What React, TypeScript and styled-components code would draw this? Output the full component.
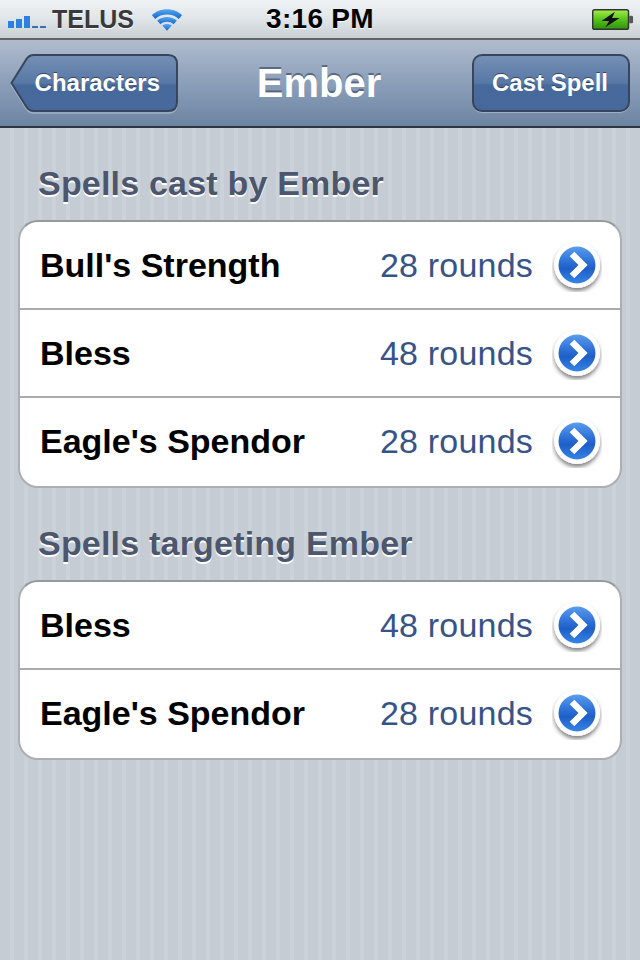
import React from 'react';
import styled, {createGlobalStyle} from 'styled-components';

const GlobalStyle = createGlobalStyle`
	html, body {
		margin: 0;
		padding: 0;
		background: #c5ccd4;
	}
	* {
		box-sizing: border-box;
	}
`;

const FONT = `"Liberation Sans", Arial, sans-serif`;

const sections = [
	{
		title: 'Spells cast by Ember',
		spells: [
			{name: "Bull's Strength", time: '28 rounds'},
			{name: 'Bless', time: '48 rounds'},
			{name: "Eagle's Spendor", time: '28 rounds'},
		],
	},
	{
		title: 'Spells targeting Ember',
		spells: [
			{name: 'Bless', time: '48 rounds'},
			{name: "Eagle's Spendor", time: '28 rounds'},
		],
	},
];

function SignalBars() {
	return (
		<SignalSvg width='40' height='12' viewBox='0 0 40 12'>
			<rect x='0' y='5' width='6' height='7' fill='#2f7fe0' />
			<rect x='8' y='3' width='6' height='9' fill='#2f7fe0' />
			<rect x='16' y='0' width='6' height='12' fill='#2f7fe0' />
			<rect x='24' y='10' width='6' height='2' fill='#3f6fb0' />
			<rect x='32' y='10' width='6' height='2' fill='#3f6fb0' />
		</SignalSvg>
	);
}

function WifiIcon() {
	return (
		<svg width='32' height='26' viewBox='0 0 34 26'>
			<defs>
				<linearGradient id='wifi' x1='0' y1='0' x2='0' y2='1'>
					<stop offset='0' stopColor='#5aa8f0' />
					<stop offset='1' stopColor='#0f66d0' />
				</linearGradient>
			</defs>
			<path d='M1 9 C9 0.5 25 0.5 33 9 L29.5 13 C23 6.8 11 6.8 4.5 13 Z' fill='url(#wifi)' />
			<path d='M6.5 14.5 C12 9.5 22 9.5 27.5 14.5 L24 18.5 C20 15.2 14 15.2 10 18.5 Z' fill='url(#wifi)' />
			<path d='M12 20 C14.5 17.8 19.5 17.8 22 20 L17 25.5 Z' fill='url(#wifi)' />
		</svg>
	);
}

function BatteryIcon() {
	return (
		<svg width='42' height='23' viewBox='0 0 44 24'>
			<defs>
				<linearGradient id='batt' x1='0' y1='0' x2='0' y2='1'>
					<stop offset='0' stopColor='#a6ee4a' />
					<stop offset='0.5' stopColor='#56c41a' />
					<stop offset='1' stopColor='#2f8f0c' />
				</linearGradient>
			</defs>
			<rect x='0.75' y='1.75' width='37.5' height='20.5' rx='2' fill='url(#batt)' stroke='#333' strokeWidth='1.5' />
			<path d='M39 8 H41.5 Q43 8 43 9.5 V14.5 Q43 16 41.5 16 H39 Z' fill='#555' />
			<path d='M24 4 L10 13.5 H18 L14 20 L29 10.5 H21 Z' fill='#111' />
		</svg>
	);
}

function BackShape() {
	return (
		<BackSvg width='168' height='60' viewBox='0 0 168 60'>
			<defs>
				<linearGradient id='back' x1='0' y1='0' x2='0' y2='1'>
					<stop offset='0' stopColor='#7490b5' />
					<stop offset='0.5' stopColor='#5877a4' />
					<stop offset='0.54' stopColor='#47699b' />
					<stop offset='1' stopColor='#46689a' />
				</linearGradient>
			</defs>
			<path
				d='M1.5 30 L16.5 6 Q19 2 24 2 H158 Q167 2 167 11 V49 Q167 58 158 58 H24 Q19 58 16.5 54 Z'
				fill='none'
				stroke='rgba(255,255,255,0.3)'
				strokeWidth='1.5'
				transform='translate(0 1)'
			/>
			<path
				d='M1.5 29 L16.5 5 Q19 1 24 1 H158 Q167 1 167 10 V48 Q167 57 158 57 H24 Q19 57 16.5 53 Z'
				fill='url(#back)'
				stroke='#37465c'
				strokeWidth='2'
			/>
		</BackSvg>
	);
}

function Disclosure() {
	return (
		<svg width='50' height='54' viewBox='0 0 50 54'>
			<defs>
				<linearGradient id='disc' x1='0' y1='0' x2='0' y2='1'>
					<stop offset='0' stopColor='#5a9cec' />
					<stop offset='0.45' stopColor='#2a6cd4' />
					<stop offset='0.6' stopColor='#1f5fc8' />
					<stop offset='1' stopColor='#3585e6' />
				</linearGradient>
				<filter id='discShadow' x='-30%' y='-30%' width='160%' height='160%'>
					<feDropShadow dx='0' dy='3' stdDeviation='2' floodColor='#000' floodOpacity='0.5' />
				</filter>
			</defs>
			<circle cx='25' cy='27' r='23' fill='#fff' filter='url(#discShadow)' />
			<circle cx='25' cy='27' r='18.5' fill='url(#disc)' />
			<path d='M20 16 L31 27 L20 38' fill='none' stroke='#fff' strokeWidth='6.5' strokeLinejoin='miter' />
		</svg>
	);
}

export default function App() {
	return (
		<Screen>
			<GlobalStyle />
			<StatusBar>
				<StatusLeft>
					<SignalBars />
					<Carrier>TELUS</Carrier>
					<WifiIcon />
				</StatusLeft>
				<Clock>3:16 PM</Clock>
				<StatusRight>
					<BatteryIcon />
				</StatusRight>
			</StatusBar>
			<NavBar>
				<NavSide>
					<BackButton>
						<BackShape />
						<BackLabel>Characters</BackLabel>
					</BackButton>
				</NavSide>
				<NavTitle>Ember</NavTitle>
				<NavSide $right>
					<BarButton>Cast Spell</BarButton>
				</NavSide>
			</NavBar>
			<Content>
				{sections.map((section) => (
					<Section key={section.title}>
						<SectionTitle>{section.title}</SectionTitle>
						<Group>
							{section.spells.map((spell) => (
								<Row key={spell.name}>
									<SpellName>{spell.name}</SpellName>
									<SpellTime>{spell.time}</SpellTime>
									<Disclosure />
								</Row>
							))}
						</Group>
					</Section>
				))}
			</Content>
		</Screen>
	);
}

const Screen = styled.div`
	width: 640px;
	height: 960px;
	overflow: hidden;
	display: flex;
	flex-direction: column;
	font-family: ${FONT};
	background-color: #c5ccd4;
	background-image: repeating-linear-gradient(
		90deg,
		#c5ccd4 0,
		#c5ccd4 10px,
		#cbd2d9 10px,
		#cbd2d9 14px
	);
`;

const StatusBar = styled.div`
	height: 40px;
	flex: none;
	display: grid;
	grid-template-columns: 1fr auto 1fr;
	align-items: center;
	padding: 0 6px 0 8px;
	background: linear-gradient(#eff3f5 0%, #e0e5e8 50%, #c9cfd3 100%);
	border-bottom: 2px solid #5f6468;
`;

const StatusLeft = styled.div`
	display: flex;
	align-items: center;
`;

const StatusRight = styled.div`
	display: flex;
	justify-content: flex-end;
`;

const SignalSvg = styled.svg`
	margin-top: 5px;
`;

const Carrier = styled.span`
	margin: 0 17px 0 4px;
	font-size: 25px;
	font-weight: 700;
	color: #3a3a3c;
	text-shadow: 0 1px 0 #fff;
`;

const Clock = styled.span`
	padding-right: 2px;
	font-size: 28px;
	font-weight: 700;
	letter-spacing: 0.3px;
	color: #000;
	text-shadow: 0 1px 0 #fff;
`;

const NavBar = styled.div`
	height: 88px;
	flex: none;
	display: grid;
	grid-template-columns: 1fr auto 1fr;
	align-items: center;
	padding: 0 10px;
	background: linear-gradient(#b0bccd 0%, #8b9fb9 50%, #6d84a2 100%);
	border-bottom: 2px solid #2d3642;
`;

const NavSide = styled.div<{$right?: boolean}>`
	display: flex;
	justify-content: ${(props) => (props.$right ? 'flex-end' : 'flex-start')};
`;

const NavTitle = styled.div`
	font-size: 40px;
	font-weight: 700;
	color: #fff;
	text-shadow: 0 -2px 0 rgba(50, 65, 90, 0.6);
	padding-right: 2px;
`;

const BackButton = styled.div`
	position: relative;
	height: 58px;
	width: 168px;
	display: flex;
	align-items: center;
	justify-content: flex-end;
	padding-right: 18px;
`;

const BackSvg = styled.svg`
	position: absolute;
	left: 0;
	top: 0;
`;

const BackLabel = styled.span`
	position: relative;
	font-size: 24px;
	font-weight: 700;
	color: #fff;
	text-shadow: 0 -1px 0 rgba(30, 45, 70, 0.7);
`;

const BarButton = styled.div`
	height: 58px;
	width: 158px;
	padding-right: 2px;
	display: flex;
	align-items: center;
	justify-content: center;
	font-size: 24px;
	font-weight: 700;
	color: #fff;
	text-shadow: 0 -1px 0 rgba(30, 45, 70, 0.7);
	border: 2px solid #37465c;
	border-radius: 10px;
	box-shadow: 0 1px 0 rgba(255, 255, 255, 0.3);
	background: linear-gradient(#7490b5 0%, #5877a4 50%, #47699b 54%, #46689a 100%);
`;

const Content = styled.div`
	display: flex;
	flex-direction: column;
	gap: 35px;
	padding: 35px 18px 0;
`;

const Section = styled.section`
	display: flex;
	flex-direction: column;
`;

const SectionTitle = styled.h2`
	margin: 0 0 17px 20px;
	font-size: 34px;
	line-height: 40px;
	font-weight: 700;
	letter-spacing: 0.2px;
	color: #4c566c;
	text-shadow: 0 2px 0 #fff;
`;

const Group = styled.div`
	background: #fff;
	border: 2px solid #acaeb1;
	border-top-color: #96999d;
	border-radius: 20px;
	overflow: hidden;
`;

const Row = styled.div`
	height: 88px;
	display: flex;
	align-items: center;
	padding: 0 18px 0 20px;
	border-bottom: 2px solid #ababab;

	&:last-child {
		border-bottom: none;
		padding-bottom: 2px;
	}
`;

const SpellName = styled.span`
	flex: 1;
	font-size: 34px;
	font-weight: 700;
	color: #000;
`;

const SpellTime = styled.span`
	margin-right: 19px;
	font-size: 34px;
	letter-spacing: 0.2px;
	color: #385487;
`;
